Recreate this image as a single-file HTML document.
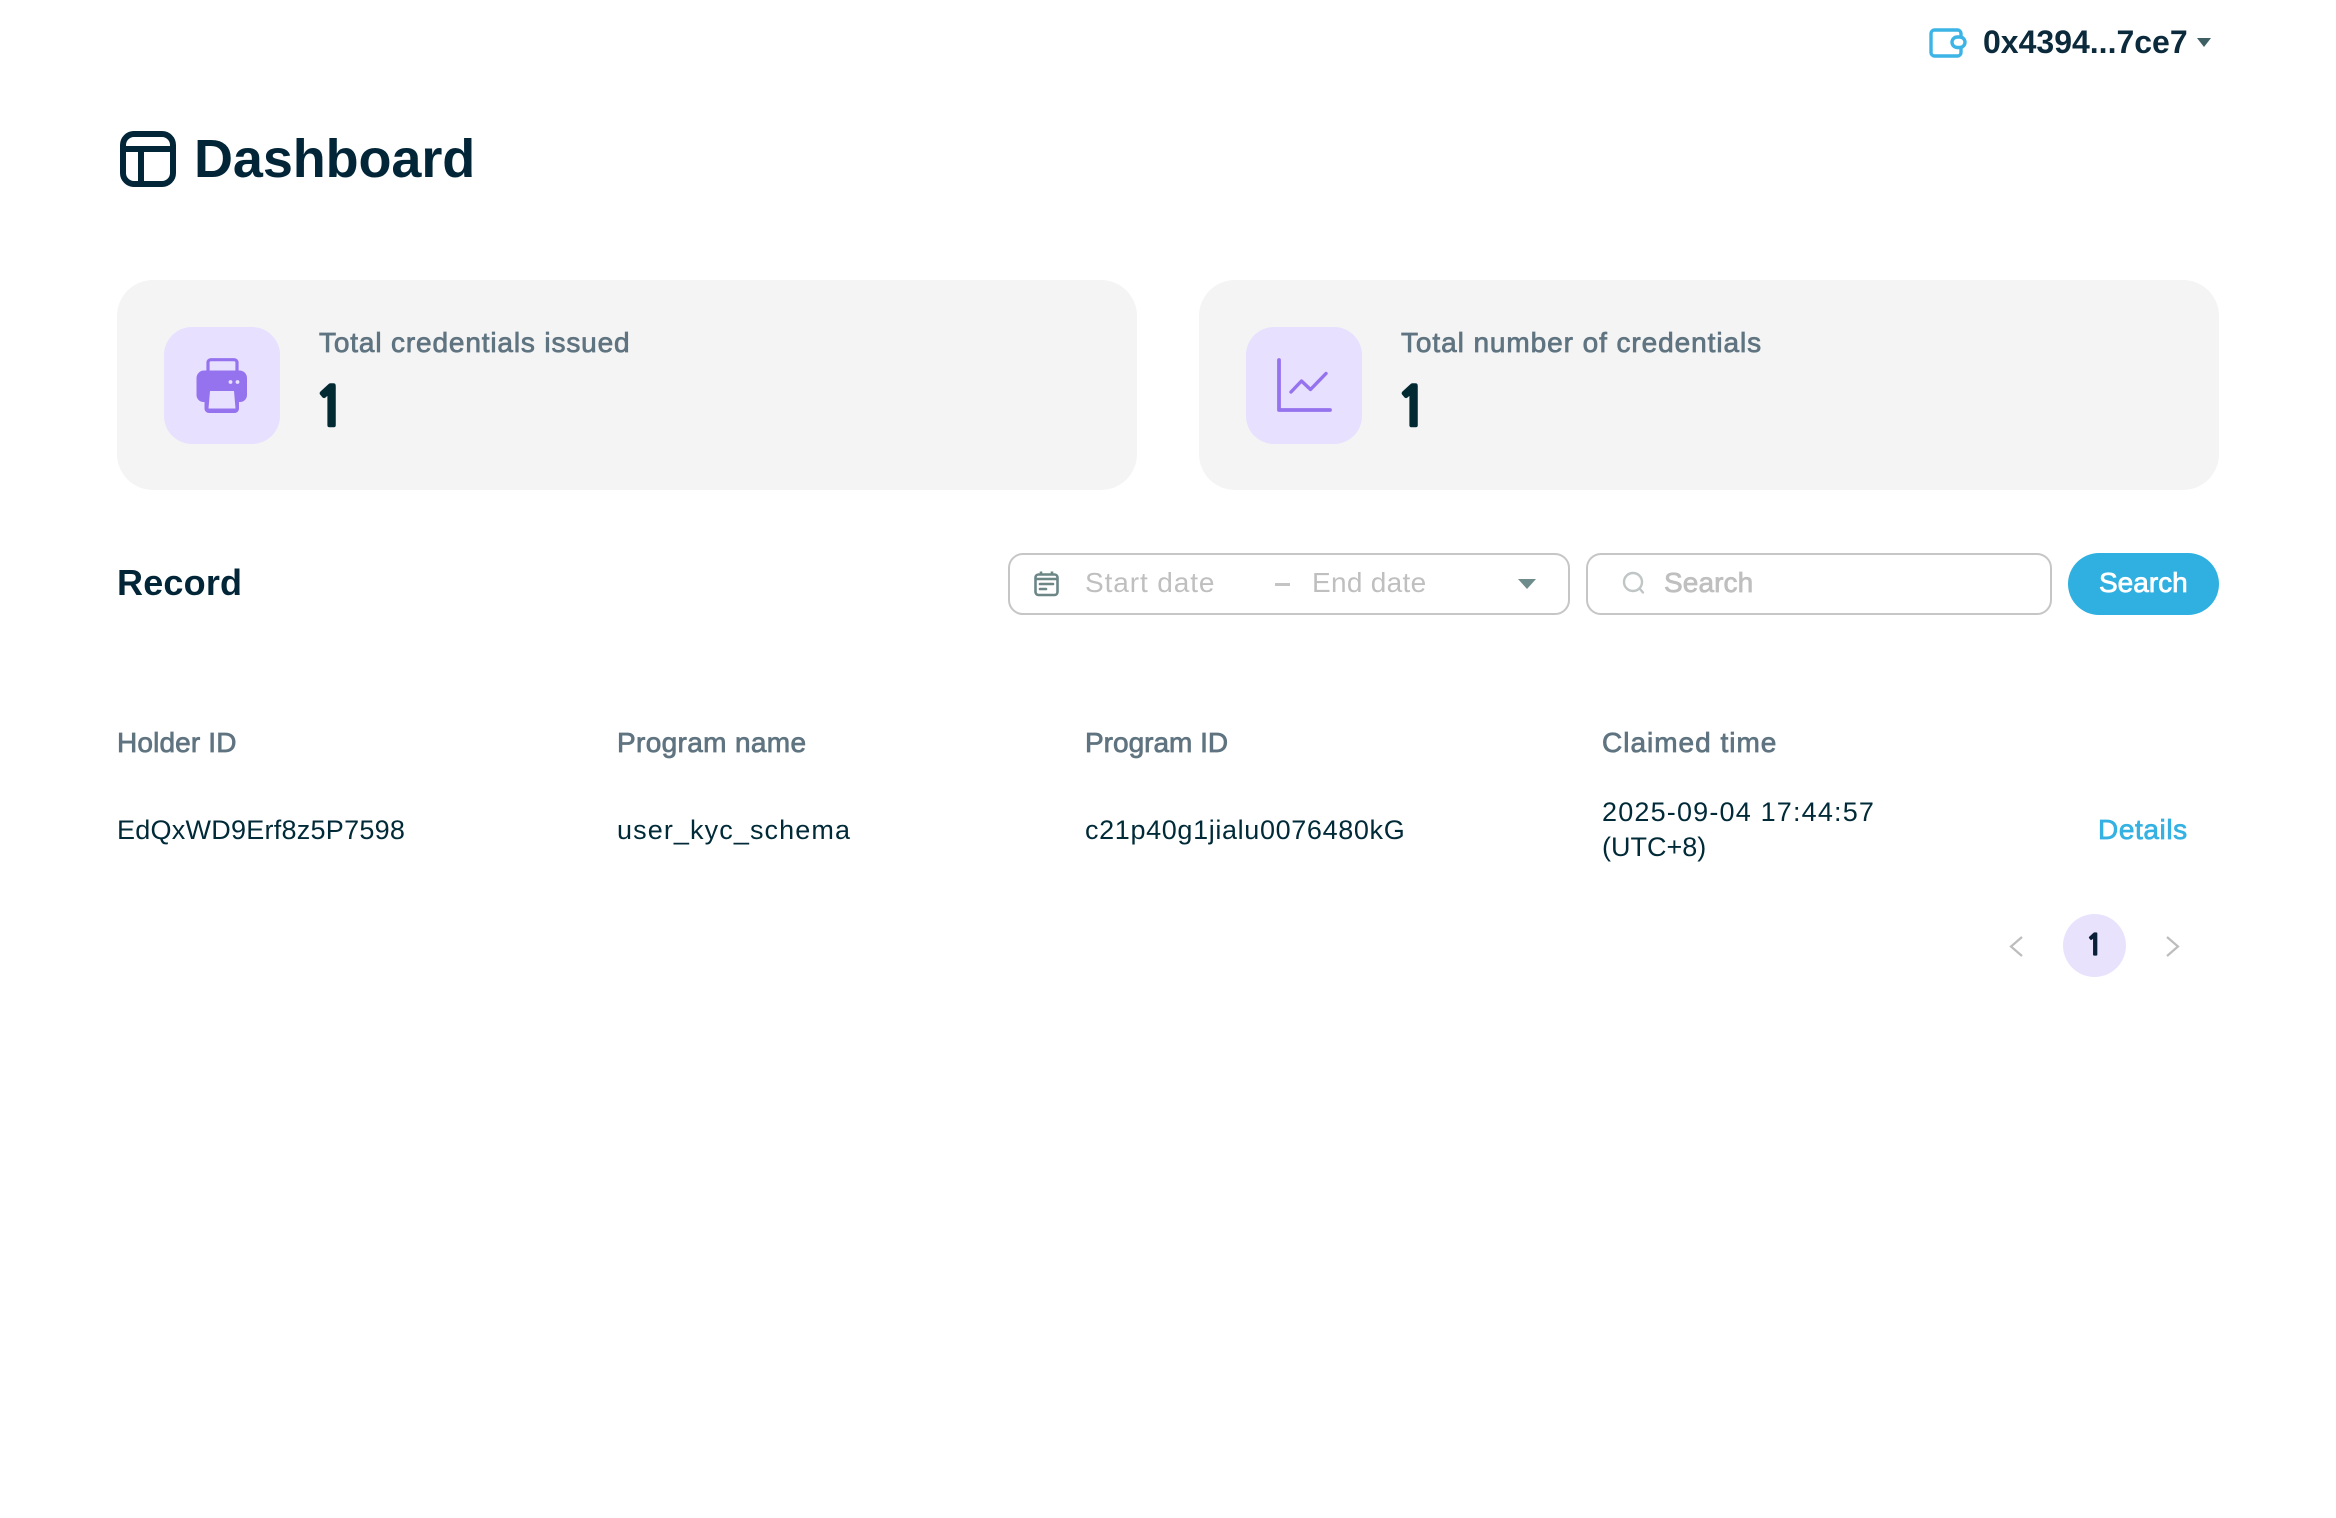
<!DOCTYPE html>
<html lang="en">
<head>
<meta charset="utf-8">
<title>Dashboard</title>
<style>
html,body{margin:0;padding:0;background:#fff;width:2336px;height:1518px;overflow:hidden}
body{position:relative;font-family:"Liberation Sans",Arial,sans-serif;color:#012a38}
.t{position:absolute;white-space:nowrap;line-height:40px;font-size:27px}
.b{position:absolute;box-sizing:border-box}
svg{position:absolute;overflow:visible}
.m{-webkit-text-stroke:.75px currentColor}
.h{font-size:28px;color:#5f7480}
.l{font-size:28px;color:#5f7480}
.n{font-family:"NanumGothic","Liberation Sans",sans-serif;font-size:54px;font-weight:700;color:#012a33;-webkit-text-stroke:2.600px #012a33}
.p{font-size:28px;color:#bfbfbf}
</style>
</head>
<body>
<!-- top wallet -->
<svg style="left:1929px;top:28px" width="38" height="30" viewBox="0 0 38 30" fill="none">
<path d="M32 9V5.5A3.5 3.5 0 0 0 28.500 2H5.500A3.500 3.500 0 0 0 2 5.500V24.500A3.500 3.500 0 0 0 5.500 28H28.500A3.500 3.500 0 0 0 32 24.500V20" stroke="#3cb4e5" stroke-width="3.400"/>
<rect x="23" y="9" width="13" height="10.500" rx="5.200" fill="#fff" stroke="#3cb4e5" stroke-width="3.400"/>
</svg>
<div class="t" style="left:1983px;top:22px;font-size:32px;font-weight:700;letter-spacing:0;color:#0b2a3c">0x4394...7ce7</div>
<svg style="left:2197px;top:38px" width="14" height="9" viewBox="0 0 14 9"><path d="M0 0H14L7 9Z" fill="#3e5f63"/></svg>

<!-- title -->
<svg style="left:120px;top:131px" width="56" height="56" viewBox="0 0 56 56" fill="none" stroke="#022638" stroke-width="6">
<rect x="3" y="3" width="50" height="50" rx="11"/>
<path d="M3 18H53M21 18V53"/>
</svg>
<div class="t" style="left:194px;top:139px;font-size:54px;font-weight:700;letter-spacing:-.1px;color:#022638">Dashboard</div>

<!-- cards -->
<div class="b" style="left:117px;top:280px;width:1020px;height:210px;background:#f4f4f4;border-radius:36px"></div>
<div class="b" style="left:1199px;top:280px;width:1020px;height:210px;background:#f4f4f4;border-radius:36px"></div>
<div class="b" style="left:164px;top:327px;width:116px;height:117px;background:#e7e0ff;border-radius:28px"></div>
<div class="b" style="left:1246px;top:327px;width:116px;height:117px;background:#e7e0ff;border-radius:28px"></div>

<!-- printer icon -->
<svg style="left:196px;top:358px" width="52" height="56" viewBox="0 0 52 56">
<path d="M12 13V4.500A2.800 2.800 0 0 1 14.800 1.700H38.200A2.800 2.800 0 0 1 41 4.500V13" fill="none" stroke="#9673ee" stroke-width="3.200"/>
<path d="M8 12.500H44A7.500 7.500 0 0 1 51 20V37A7 7 0 0 1 44 44H43V51A4.500 4.500 0 0 1 38.500 55H13A4.500 4.500 0 0 1 8.500 51V44H7.500A7 7 0 0 1 .5 37V20A7.500 7.500 0 0 1 8 12.500Z" fill="#9673ee"/>
<path d="M14 33H38L39.500 50.500H12.500Z" fill="#e7e0ff"/>
<circle cx="34.500" cy="24" r="1.900" fill="#e7e0ff"/>
<circle cx="41.500" cy="24" r="1.900" fill="#e7e0ff"/>
</svg>

<!-- chart icon -->
<svg style="left:1276px;top:358px" width="58" height="56" viewBox="0 0 58 56" fill="none" stroke="#9673ee" stroke-linecap="round" stroke-linejoin="round">
<path d="M3 2V52H54" stroke-width="3.800"/>
<path d="M15 34L25.500 23L34.500 31.500L50 15.500" stroke-width="3.400"/>
</svg>

<div class="t l m" style="left:319px;top:323px;letter-spacing:.85px">Total credentials issued</div>
<div class="t n" style="left:314px;top:389px">1</div>
<div class="t l m" style="left:1401px;top:323px;letter-spacing:.92px">Total number of credentials</div>
<div class="t n" style="left:1396px;top:389px">1</div>

<!-- record toolbar -->
<div class="t" style="left:117px;top:563px;font-size:36px;font-weight:700;letter-spacing:.2px;color:#022638">Record</div>

<div class="b" style="left:1008px;top:553px;width:562px;height:62px;border:2.500px solid #c6c6c6;border-radius:15px"></div>
<svg style="left:1033px;top:570px" width="27" height="27" viewBox="0 0 27 27" fill="none" stroke="#6c8686" stroke-width="2.600">
<rect x="2.500" y="4.500" width="22" height="20.500" rx="3"/>
<path d="M8 1.500V5M19 1.500V5M2.500 9H24.500"/>
<path d="M7 14H20M7 19H13" stroke-linecap="round"/>
</svg>
<div class="t p" style="left:1085px;top:563px;letter-spacing:.9px">Start date</div>
<div class="b" style="left:1275px;top:583px;width:15px;height:3px;background:#c4c4c4"></div>
<div class="t p" style="left:1312px;top:563px;letter-spacing:.3px">End date</div>
<svg style="left:1518px;top:579px" width="18" height="10" viewBox="0 0 18 10"><path d="M0 0H18L9 10Z" fill="#6f8c8c"/></svg>

<div class="b" style="left:1586px;top:553px;width:466px;height:62px;border:2.500px solid #c6c6c6;border-radius:15px"></div>
<svg style="left:1622px;top:571px" width="24" height="24" viewBox="0 0 24 24" fill="none" stroke="#c0c6c6" stroke-width="2.400" stroke-linecap="round">
<circle cx="11" cy="11" r="9"/>
<path d="M18 18L21 21.500"/>
</svg>
<div class="t p m" style="left:1664px;top:563px;letter-spacing:.1px">Search</div>

<div class="b" style="left:2068px;top:553px;width:151px;height:62px;background:#2fb0e0;border-radius:31px"></div>
<div class="t m" style="left:2099px;top:563px;font-size:28px;color:#fff">Search</div>

<!-- table head -->
<div class="t h m" style="left:117px;top:723px;letter-spacing:.15px">Holder ID</div>
<div class="t h m" style="left:617px;top:723px;letter-spacing:.35px">Program name</div>
<div class="t h m" style="left:1085px;top:723px;letter-spacing:0">Program ID</div>
<div class="t h m" style="left:1602px;top:723px;letter-spacing:1px">Claimed time</div>

<!-- table row -->
<div class="t" style="left:117px;top:810px;letter-spacing:.25px">EdQxWD9Erf8z5P7598</div>
<div class="t" style="left:617px;top:810px;letter-spacing:1.100px">user_kyc_schema</div>
<div class="t" style="left:1085px;top:810px;letter-spacing:.64px">c21p40g1jialu0076480kG</div>
<div class="t" style="left:1602px;top:792px;letter-spacing:1.180px">2025-09-04 17:44:57</div>
<div class="t" style="left:1602px;top:827px">(UTC+8)</div>
<div class="t m" style="left:2098px;top:810px;font-size:28px;letter-spacing:.6px;color:#35b1e2">Details</div>

<!-- pagination -->
<svg style="left:2009px;top:936px" width="14" height="21" viewBox="0 0 14 21" fill="none" stroke="#bdbdbd" stroke-width="2.200"><path d="M13 1L2 10.500L13 20"/></svg>
<div class="b" style="left:2063px;top:914px;width:63px;height:63px;background:#e8e2fc;border-radius:50%"></div>
<div class="t" style="left:2063px;top:926px;width:63px;text-align:center;font-family:'NanumGothic','Liberation Sans',sans-serif;font-size:29px;font-weight:700;color:#0b2038;-webkit-text-stroke:1.200px #0b2038">1</div>
<svg style="left:2166px;top:936px" width="14" height="21" viewBox="0 0 14 21" fill="none" stroke="#bdbdbd" stroke-width="2.200"><path d="M1 1L12 10.500L1 20"/></svg>
</body>
</html>
